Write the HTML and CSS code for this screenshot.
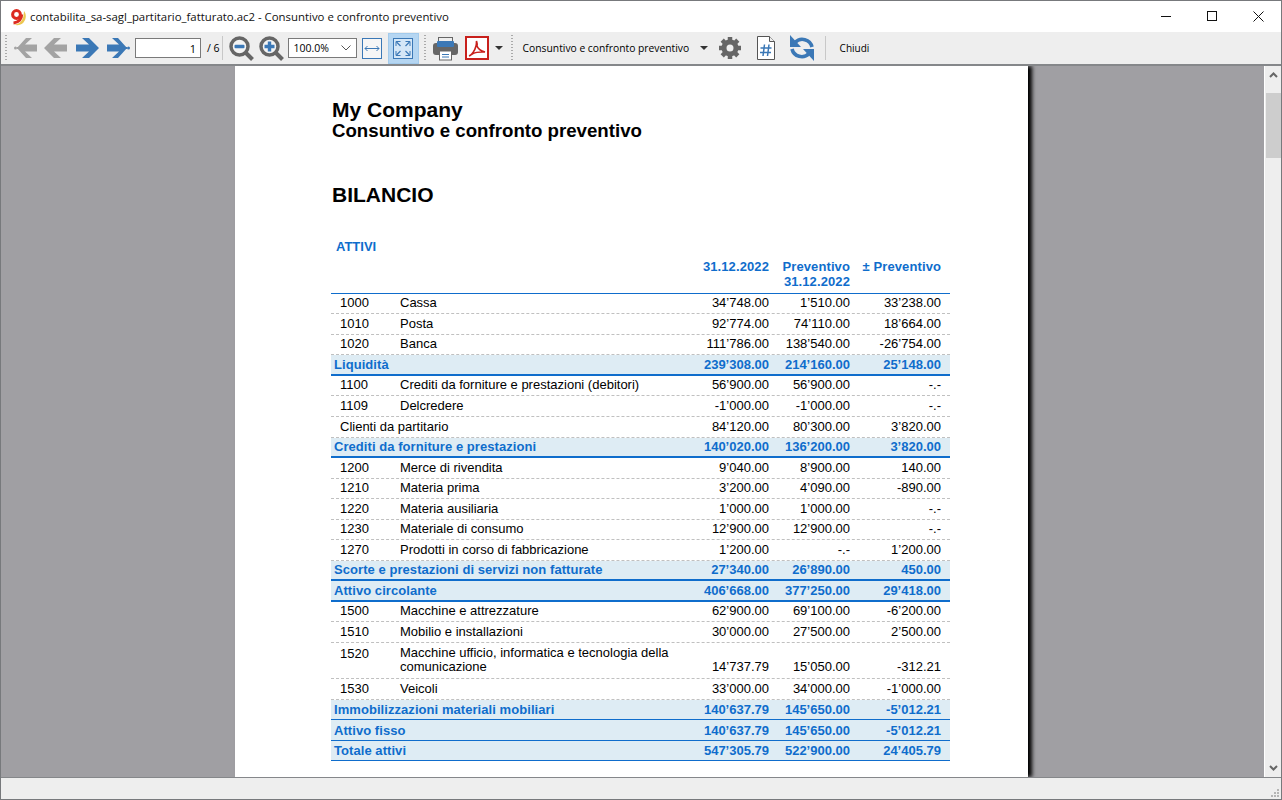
FILE: index.html
```html
<!DOCTYPE html>
<html>
<head>
	<title>contabilita_sa-sagl_partitario_fatturato.ac2 - Consuntivo e confronto preventivo</title>
	<link rel="stylesheet" href="styles.css">
</head>
<body>
<div class="window">

	<div class="titlebar">
		<svg class="app-icon" width="18" height="18" viewBox="0 0 18 18">
			<path d="M5 16.500c5 .5 8.500-3.500 9.500-8.500l.5-5c2.500 3 2.500 8-.5 11.500-2.500 2.500-6.500 3.500-9.500 2z" fill="#ecc750"/>
			<circle cx="7.500" cy="6.500" r="3.900" fill="none" stroke="#dc2a20" stroke-width="3"/>
			<path d="M12.700 6.500c0 4.500-3 8-8.200 8.500" fill="none" stroke="#dc2a20" stroke-width="3"/>
		</svg>
		<span class="title-text">contabilita_sa-sagl_partitario_fatturato.ac2 - Consuntivo e confronto preventivo</span>
		<div class="win-controls">
			<svg width="11" height="11" viewBox="0 0 11 11"><path d="M0 5.500h10" stroke="#111" fill="none"/></svg>
			<svg width="11" height="11" viewBox="0 0 11 11"><rect x=".5" y=".5" width="9" height="9" stroke="#111" fill="none"/></svg>
			<svg width="11" height="11" viewBox="0 0 11 11"><path d="M.5.500l10 10M10.500.500l-10 10" stroke="#111" fill="none"/></svg>
		</div>
	</div>

	<div class="toolbar">
		<span class="grip"></span>
		<svg class="t-first" width="23" height="20" viewBox="0 0 23 20"><circle cx="1.500" cy="10" r="1.500" fill="#a3a3a3"/><path d="M3 10h3" stroke="#a3a3a3" stroke-width="2"/><path d="M12 0h6l-7 6.500h12v7H11l7 6.500h-6L3 10z" fill="#a3a3a3"/></svg>
		<svg class="t-prev" width="23" height="20" viewBox="0 0 23 20"><path d="M10 0h7l-7 6.500h13v7H10l7 6.500h-7L0 10z" fill="#a3a3a3"/></svg>
		<svg class="t-next" width="23" height="20" viewBox="0 0 23 20"><path d="M6 0h7l10 10-10 10H6l7-6.500H0v-7h13z" fill="#3b78b6"/></svg>
		<svg class="t-last" width="23" height="20" viewBox="0 0 23 20"><circle cx="21.500" cy="10" r="1.500" fill="#3b78b6"/><path d="M17 10h3" stroke="#3b78b6" stroke-width="2"/><path d="M5 0h6l9 10-9 10H5l7-6.500H0v-7h12z" fill="#3b78b6"/></svg>
		<input class="page-input" type="text" value="1">
		<span class="page-total">/ 6</span>
		<span class="sep"></span>
		<svg class="t-zoomout" width="25" height="25" viewBox="0 0 25 25"><circle cx="10.500" cy="10.500" r="8.500" fill="#f4f4f4" stroke="#666" stroke-width="3.500"/><rect x="5.500" y="8.800" width="10" height="3.400" rx="1" fill="#3b78b6"/><path d="M17 17l6.500 6.500" stroke="#666" stroke-width="4"/></svg>
		<svg class="t-zoomin" width="25" height="25" viewBox="0 0 25 25"><circle cx="10.500" cy="10.500" r="8.500" fill="#f4f4f4" stroke="#666" stroke-width="3.500"/><path d="M5.500 10.500h10M10.500 5.500v10" stroke="#3b78b6" stroke-width="3.400"/><path d="M17 17l6.500 6.500" stroke="#666" stroke-width="4"/></svg>
		<div class="combo">100.0%
			<svg width="10" height="6" viewBox="0 0 10 6"><path d="M.5.500 5 5 9.500.500" stroke="#555" fill="none"/></svg>
		</div>
		<svg class="t-fitw" width="20" height="21" viewBox="0 0 20 21"><rect x=".5" y=".5" width="19" height="20" fill="#f6f6f6" stroke="#3b78b6"/><path d="M3 10.500h14" stroke="#3b78b6"/><path d="M5.500 8 3 10.500 5.500 13M14.500 8 17 10.500 14.500 13" stroke="#3b78b6" fill="none"/></svg>
		<div class="fit-page">
			<svg width="20" height="21" viewBox="0 0 20 21"><rect x=".5" y=".5" width="19" height="20" fill="#d5e7f7" stroke="#3b78b6"/><path d="M3.500 4l4 4M16.500 4l-4 4M3.500 17l4-4M16.500 17l-4-4" stroke="#3b78b6" stroke-width="1.200"/><path d="M3 8V3.500h4.500M17 8V3.500h-4.500M3 13v4.500h4.500M17 13v4.500h-4.500" stroke="#3b78b6" fill="none"/></svg>
		</div>
		<span class="grip grip-b"></span>
		<svg class="t-print" width="25" height="25" viewBox="0 0 25 25"><rect x="5.500" y="1.500" width="14" height="6" fill="#eee" stroke="#666"/><rect x="0" y="7" width="25" height="12" rx="3" fill="#666"/><rect x="4" y="5" width="17" height="6" rx="1" fill="#3b78b6"/><rect x="6.500" y="15" width="12" height="9" fill="#fff" stroke="#666"/><path d="M9 18.500h7M9 21h7" stroke="#3b78b6"/></svg>
		<svg class="t-pdf" width="24" height="24" viewBox="0 0 24 24"><rect x="1" y="1" width="22" height="22" fill="#fff" stroke="#c8201c" stroke-width="2"/><path d="M4 20c3-1 6-6 7-10 .5-2 .5-5 .5-5s1 3 .5 5c1 3 4 5 8 6-3 0-8-.5-12 1.500-1.500.8-2.500 2-4 2.500z" fill="none" stroke="#c8201c" stroke-width="1.600"/></svg>
		<span class="caret t-pdfcaret"></span>
		<span class="grip grip-c"></span>
		<span class="report-name">Consuntivo e confronto preventivo</span>
		<span class="caret t-namecaret"></span>
		<svg class="t-gear" width="24" height="24" viewBox="0 0 24 24"><circle cx="12" cy="12" r="6" fill="none" stroke="#666" stroke-width="5"/><path d="M12 1v5M12 18v5M1 12h5M18 12h5M4.200 4.200l3.600 3.600M16.200 16.200l3.600 3.600M19.800 4.200l-3.600 3.600M7.800 16.200l-3.600 3.600" stroke="#666" stroke-width="4.500" fill="none"/></svg>
		<svg class="t-file" width="18" height="24" viewBox="0 0 18 24"><path d="M.5.500h12l5 5v18H.5z" fill="#fff" stroke="#555"/><path d="M12.500.500v5h5" fill="#eee" stroke="#555"/><path d="M7.500 8.500 6 20M12 8.500 10.500 20M3.500 12h11M3 16.500h11" stroke="#3b78b6" stroke-width="1.500"/></svg>
		<svg class="t-refresh" width="26" height="26" viewBox="0 0 26 26"><path d="M6 7.500A10 10 0 0 1 23 12" fill="none" stroke="#3b78b6" stroke-width="3.600"/><path d="M20 18.500A10 10 0 0 1 3 14" fill="none" stroke="#3b78b6" stroke-width="3.600"/><path d="M1 0v12h11z" fill="#3b78b6"/><path d="M25 26V14H14z" fill="#3b78b6"/></svg>
		<span class="sep sep-b"></span>
		<span class="close-btn">Chiudi</span>
	</div>

	<div class="main">
		<div class="viewport">
			<div class="page">
				<div class="company">My Company</div>
				<div class="subtitle">Consuntivo e confronto preventivo</div>
				<div class="heading">BILANCIO</div>
				<div class="section">ATTIVI</div>

				<div class="report">
					<div class="row head">
						<span></span><span></span>
						<span class="num">31.12.2022</span>
						<span class="num">Preventivo<br>31.12.2022</span>
						<span class="num">± Preventivo</span>
					</div>

					<div class="row"><span>1000</span><span>Cassa</span><span class="num">34’748.00</span><span class="num">1’510.00</span><span class="num">33’238.00</span></div>
					<div class="row"><span>1010</span><span>Posta</span><span class="num">92’774.00</span><span class="num">74’110.00</span><span class="num">18’664.00</span></div>
					<div class="row"><span>1020</span><span>Banca</span><span class="num">111’786.00</span><span class="num">138’540.00</span><span class="num">-26’754.00</span></div>
					<div class="row total"><span class="label">Liquidità</span><span class="num">239’308.00</span><span class="num">214’160.00</span><span class="num">25’148.00</span></div>

					<div class="row"><span>1100</span><span>Crediti da forniture e prestazioni (debitori)</span><span class="num">56’900.00</span><span class="num">56’900.00</span><span class="num">-.-</span></div>
					<div class="row"><span>1109</span><span>Delcredere</span><span class="num">-1’000.00</span><span class="num">-1’000.00</span><span class="num">-.-</span></div>
					<div class="row"><span class="wide">Clienti da partitario</span><span class="num">84’120.00</span><span class="num">80’300.00</span><span class="num">3’820.00</span></div>
					<div class="row total"><span class="label">Crediti da forniture e prestazioni</span><span class="num">140’020.00</span><span class="num">136’200.00</span><span class="num">3’820.00</span></div>

					<div class="row"><span>1200</span><span>Merce di rivendita</span><span class="num">9’040.00</span><span class="num">8’900.00</span><span class="num">140.00</span></div>
					<div class="row"><span>1210</span><span>Materia prima</span><span class="num">3’200.00</span><span class="num">4’090.00</span><span class="num">-890.00</span></div>
					<div class="row"><span>1220</span><span>Materia ausiliaria</span><span class="num">1’000.00</span><span class="num">1’000.00</span><span class="num">-.-</span></div>
					<div class="row"><span>1230</span><span>Materiale di consumo</span><span class="num">12’900.00</span><span class="num">12’900.00</span><span class="num">-.-</span></div>
					<div class="row"><span>1270</span><span>Prodotti in corso di fabbricazione</span><span class="num">1’200.00</span><span class="num">-.-</span><span class="num">1’200.00</span></div>
					<div class="row total"><span class="label">Scorte e prestazioni di servizi non fatturate</span><span class="num">27’340.00</span><span class="num">26’890.00</span><span class="num">450.00</span></div>
					<div class="row total"><span class="label">Attivo circolante</span><span class="num">406’668.00</span><span class="num">377’250.00</span><span class="num">29’418.00</span></div>

					<div class="row"><span>1500</span><span>Macchine e attrezzature</span><span class="num">62’900.00</span><span class="num">69’100.00</span><span class="num">-6’200.00</span></div>
					<div class="row"><span>1510</span><span>Mobilio e installazioni</span><span class="num">30’000.00</span><span class="num">27’500.00</span><span class="num">2’500.00</span></div>
					<div class="row tall"><span>1520</span><span>Macchine ufficio, informatica e tecnologia della comunicazione</span><span class="num">14’737.79</span><span class="num">15’050.00</span><span class="num">-312.21</span></div>
					<div class="row"><span>1530</span><span>Veicoli</span><span class="num">33’000.00</span><span class="num">34’000.00</span><span class="num">-1’000.00</span></div>
					<div class="row total thin"><span class="label">Immobilizzazioni materiali mobiliari</span><span class="num">140’637.79</span><span class="num">145’650.00</span><span class="num">-5’012.21</span></div>
					<div class="row total thin"><span class="label">Attivo fisso</span><span class="num">140’637.79</span><span class="num">145’650.00</span><span class="num">-5’012.21</span></div>
					<div class="row total thin"><span class="label">Totale attivi</span><span class="num">547’305.79</span><span class="num">522’900.00</span><span class="num">24’405.79</span></div>
				</div>
			</div>
		</div>

		<div class="scrollbar">
			<svg width="9" height="6" viewBox="0 0 9 6"><path d="M1 5l3.500-3.500L8 5" stroke="#666" stroke-width="2" fill="none"/></svg>
			<div class="thumb"></div>
			<svg class="down" width="9" height="6" viewBox="0 0 9 6"><path d="M1 1l3.500 3.500L8 1" stroke="#666" stroke-width="2" fill="none"/></svg>
		</div>
	</div>

	<div class="statusbar">
		<svg width="9" height="9" viewBox="0 0 9 9" fill="#b5b5b5"><rect x="6" y="0" width="2" height="2"/><rect x="3" y="3" width="2" height="2"/><rect x="6" y="3" width="2" height="2"/><rect x="0" y="6" width="2" height="2"/><rect x="3" y="6" width="2" height="2"/><rect x="6" y="6" width="2" height="2"/></svg>
	</div>

</div>
</body>
</html>
```

FILE: styles.css
```css
html, body{
	margin: 0;
	height: 100%;
	overflow: hidden;
}

body{
	font-family: "Liberation Sans", Arial, sans-serif;
	background: #fff;
}

.window{
	box-sizing: border-box;
	height: 800px;
	border: 1px solid #77797c;
	display: flex;
	flex-direction: column;
	color: #000;
}

/* title bar */
.titlebar{
	height: 31px;
	flex: none;
	display: flex;
	align-items: center;
	background: #fff;
	padding-left: 8px;
}

.app-icon{
	margin-right: 3px;
}

.title-text{
	font-family: "Open Sans", sans-serif;
	font-size: 11.4px;
	color: #111;
}

.win-controls{
	margin-left: auto;
	display: flex;
	gap: 35px;
	padding-right: 17px;
}

/* toolbar */
.toolbar{
	height: 34px;
	flex: none;
	box-sizing: border-box;
	display: flex;
	align-items: center;
	background: #eeeeee;
	border-bottom: 2px solid #85878a;
	padding-left: 4px;
	font-family: "Open Sans", sans-serif;
	font-size: 10.5px;
}

.toolbar svg{
	flex: none;
}

.grip{
	width: 2px;
	height: 26px;
	flex: none;
	background-image: linear-gradient(#aaa 50%, transparent 50%);
	background-size: 2px 3px;
}

.grip-b{ margin-left: 5px; }
.grip-c{ margin-left: 8px; }

.sep{
	width: 1px;
	height: 24px;
	background: #c8c8c8;
	flex: none;
	margin-left: 2px;
}

.t-first{ margin-left: 7px; }
.t-prev{ margin-left: 7px; }
.t-next{ margin-left: 9px; }
.t-last{ margin-left: 8px; }

.page-input{
	box-sizing: border-box;
	width: 66px;
	height: 20px;
	margin: 0 0 0 5px;
	padding: 0 4px;
	border: 1px solid #7a7a7a;
	background: #fff;
	font-family: "Open Sans", sans-serif;
	font-size: 11px;
	text-align: right;
	outline: none;
}

.page-total{
	margin-left: 6px;
}

.t-zoomout{ margin-left: 6px; }
.t-zoomin{ margin-left: 5px; }

.combo{
	box-sizing: border-box;
	width: 69px;
	height: 20px;
	margin-left: 4px;
	padding: 0 5px;
	border: 1px solid #7a7a7a;
	background: #fff;
	display: flex;
	align-items: center;
	justify-content: space-between;
}

.t-fitw{ margin-left: 5px; }

.fit-page{
	box-sizing: border-box;
	width: 31px;
	height: 31px;
	margin-left: 6px;
	background: #b5d6f2;
	border: 1px solid #a3cbec;
	display: flex;
	align-items: center;
	justify-content: center;
}

.t-print{ margin-left: 7px; }
.t-pdf{ margin-left: 7px; }

.caret{
	width: 0;
	height: 0;
	flex: none;
	border-left: 4px solid transparent;
	border-right: 4px solid transparent;
	border-top: 4px solid #333;
}

.t-pdfcaret{ margin-left: 6px; }

.report-name{
	margin-left: 10px;
	white-space: nowrap;
	width: 167px;
	font-size: 10.3px;
}

.t-namecaret{ margin-left: 10px; }
.t-gear{ margin-left: 10px; }
.t-file{ margin-left: 15px; }
.t-refresh{ margin-left: 14px; }
.sep-b{ margin-left: 10px; }

.close-btn{
	margin-left: 14px;
	font-size: 10px;
}

/* document area */
.main{
	flex: 1;
	min-height: 0;
	display: flex;
}

.viewport{
	flex: 1;
	overflow: hidden;
	background: #a09fa3;
	padding-left: 234px;
}

.page{
	box-sizing: border-box;
	width: 793px;
	height: 100%;
	background: #fff;
	box-shadow: 4px 0 4px #000;
	padding: 33px 78px 0 97px;
}

.company{
	font-size: 21px;
	font-weight: bold;
	line-height: 22px;
}

.subtitle{
	font-size: 18.67px;
	font-weight: bold;
	line-height: 20px;
}

.heading{
	font-size: 21px;
	font-weight: bold;
	line-height: 24px;
	margin-top: 42px;
}

.section{
	font-size: 13px;
	font-weight: bold;
	color: #0f6dcc;
	line-height: 15px;
	margin-top: 32px;
	padding-left: 4px;
}

/* report table */
.report{
	font-size: 13px;
	margin-left: -1px;
}

.row{
	box-sizing: border-box;
	height: 20.55px;
	display: grid;
	grid-template-columns: 69px 290px 79px 81px 91px 9px;
	align-items: end;
	border-bottom: 1px dashed #c0c0c0;
	padding-bottom: 3px;
	line-height: 14px;
}

.row > span:first-child{
	padding-left: 9px;
}

.row > span.label{
	grid-column: 1 / 3;
	padding-left: 3px;
	letter-spacing: .06px;
}

.row > span.wide{
	grid-column: 1 / 3;
}

.num{
	text-align: right;
	white-space: nowrap;
}

.head{
	height: 39.7px;
	padding: 5px 0 0;
	line-height: 15px;
	align-items: start;
	color: #0f6dcc;
	font-weight: bold;
	letter-spacing: .1px;
	border-bottom: 1px solid #0f6dcc;
}

.tall{
	height: 36px;
	padding-bottom: 4px;
}

.tall > span:nth-child(2){
	padding-right: 8px;
}

.tall > span:first-child{
	align-self: start;
	padding-top: 4px;
}

.total{
	background: #deecf4;
	color: #0f6dcc;
	font-weight: bold;
	border-bottom: 2px solid #0f6dcc;
	padding-bottom: 2px;
}

.total.thin{
	border-bottom-width: 1px;
}

/* scrollbar */
.scrollbar{
	width: 17px;
	flex: none;
	box-sizing: border-box;
	background: #eeeeee;
	border-left: 1px solid #fff;
	display: flex;
	flex-direction: column;
	align-items: center;
	padding-top: 6px;
}

.thumb{
	width: 15px;
	height: 65px;
	background: #cdcdcd;
	margin-top: 15px;
}

.down{
	margin-top: auto;
	margin-bottom: 6px;
}

/* status bar */
.statusbar{
	height: 22px;
	flex: none;
	box-sizing: border-box;
	background: #eeeeee;
	border-top: 1px solid #85878a;
	display: flex;
	align-items: flex-end;
	justify-content: flex-end;
	padding: 0 1px 1px 0;
}
```
